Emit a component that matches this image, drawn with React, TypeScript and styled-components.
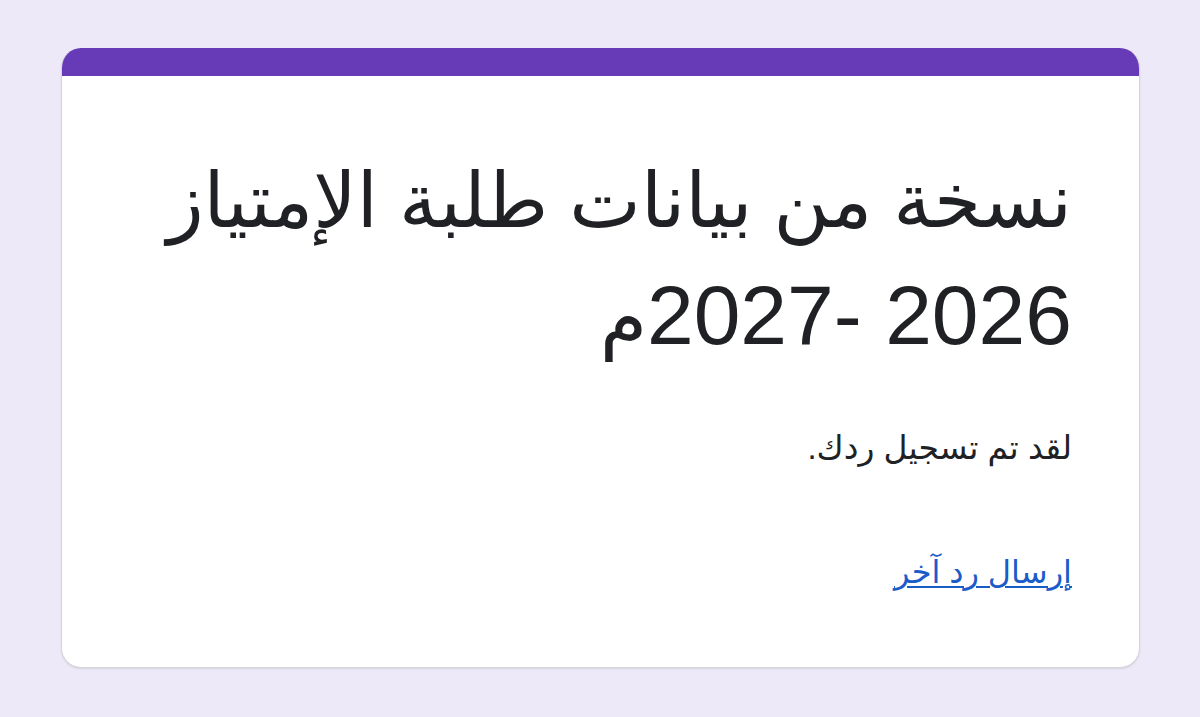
import React from "react";
import styled, { createGlobalStyle } from "styled-components";

const Global = createGlobalStyle`
  html, body { margin: 0; padding: 0; }
  body {
    background: #ede9f8;
    font-family: "Liberation Sans", "DejaVu Sans", Arial, sans-serif;
  }
`;

const Page = styled.div`
  min-height: 717px;
  box-sizing: border-box;
  padding: 48px 60px 0 61px;
`;

const Card = styled.div`
  background: #ffffff;
  border-radius: 20px;
  border: 1.5px solid #d6d6da;
  border-top: none;
  box-shadow: 0 1px 2px rgba(60, 64, 67, 0.12);
  overflow: hidden;
  height: 620px;
  box-sizing: border-box;
  display: flex;
  flex-direction: column;
`;

const TopBar = styled.div`
  height: 28px;
  background: #673ab7;
  flex: none;
`;

const Body = styled.div`
  direction: rtl;
  padding: 65px 67px 0 60px;
  display: flex;
  flex-direction: column;
`;

const Title = styled.h1`
  margin: 0;
  font-weight: 400;
  font-size: 84px;
  line-height: 115px;
  color: #202124;
`;

const TitleWords = styled.span`
  font-size: 76px;
`;

const Message = styled.p`
  margin: 53px 0 0;
  font-size: 33px;
  line-height: 40px;
  color: #202124;
`;

const Link = styled.a`
  margin-top: 86px;
  align-self: flex-start;
  font-size: 32px;
  line-height: 36px;
  color: #1a5cc8;
  text-decoration: underline;
  text-decoration-thickness: 1.5px;
  text-underline-offset: 3px;
`;

export default function App() {
  return (
    <>
      <Global />
      <Page>
        <Card>
          <TopBar />
          <Body>
            <Title>
              <TitleWords>نسخة من بيانات طلبة الإمتياز</TitleWords> 2026 -2027<TitleWords>م</TitleWords>
            </Title>
            <Message>لقد تم تسجيل ردك.</Message>
            <Link href="#">إرسال رد آخر</Link>
          </Body>
        </Card>
      </Page>
    </>
  );
}
